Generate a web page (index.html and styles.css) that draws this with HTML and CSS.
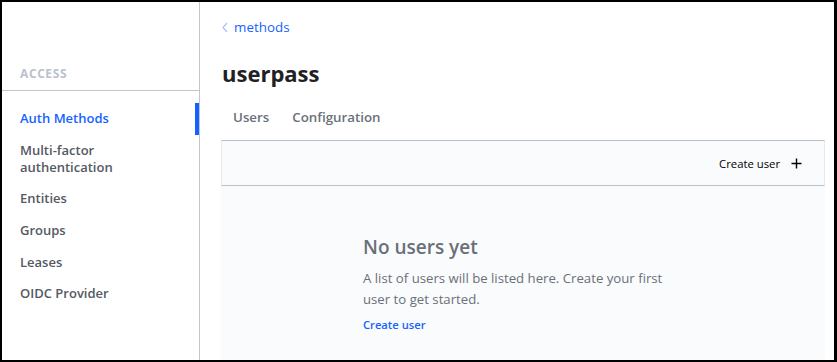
FILE: index.html
```html
<!DOCTYPE html>
<html lang="en">
<head>
  <meta charset="UTF-8">
  <title>userpass – Auth Methods</title>
  <link rel="stylesheet" href="styles.css">
</head>
<body>
  <div class="frame">
    <aside class="sidebar">
      <div class="sidebar-head">Access</div>
      <nav class="side-nav">
        <a class="side-link active">Auth Methods</a>
        <a class="side-link">Multi-factor<br>authentication</a>
        <a class="side-link">Entities</a>
        <a class="side-link">Groups</a>
        <a class="side-link">Leases</a>
        <a class="side-link">OIDC Provider</a>
      </nav>
    </aside>
    <main class="main">
      <a class="crumb">
        <svg width="6" height="11" viewBox="0 0 6 11"><path d="M5 1 L1 5.5 L5 10" fill="none" stroke="#a9c4ff" stroke-width="1.3"/></svg>
        <span>methods</span>
      </a>
      <h1 class="page-title">userpass</h1>
      <div class="tabs">
        <a class="tab">Users</a>
        <a class="tab">Configuration</a>
      </div>
      <div class="toolbar">
        <a class="toolbar-btn">
          Create user
          <svg width="11" height="11" viewBox="0 0 11 11"><path d="M5.5 0.5 V10.5 M0.5 5.5 H10.5" stroke="#000" stroke-width="1.4"/></svg>
        </a>
      </div>
      <div class="empty">
        <div class="empty-body">
          <h2 class="empty-title">No users yet</h2>
          <p class="empty-text">A list of users will be listed here. Create your first user to get started.</p>
          <a class="empty-link">Create user</a>
        </div>
      </div>
    </main>
  </div>
</body>
</html>
```

FILE: styles.css
```css
html, body {
  margin: 0;
  height: 100%;
  background: #000;
}
body {
  padding: 2px 3px 2px 2px;
  box-sizing: border-box;
  font-family: "Open Sans", "Noto Sans", sans-serif;
  color: #1f2124;
}
a { cursor: pointer; text-decoration: none; }
.frame {
  display: flex;
  height: 100%;
  background: #fff;
  overflow: hidden;
}
.sidebar {
  width: 197px;
  flex: 0 0 197px;
  border-right: 1px solid #c2c5cc;
}
.sidebar-head {
  height: 89px;
  box-sizing: border-box;
  display: flex;
  align-items: flex-end;
  padding: 0 18px 8px;
  border-bottom: 1px solid #c2c5cc;
  color: #bac1cc;
  font-size: 12px;
  font-weight: 700;
  letter-spacing: 0.6px;
  text-transform: uppercase;
}
.side-nav {
  display: flex;
  flex-direction: column;
  padding-top: 12px;
}
.side-link {
  padding: 7px 18px 7.7px;
  font-size: 13px;
  font-weight: 600;
  line-height: 17px;
  color: #545962;
}
.side-link.active {
  color: #1563ff;
  box-shadow: inset -4px 0 0 #1563ff;
}
.main {
  flex: 1;
  padding: 0 9px 0 21px;
  display: flex;
  flex-direction: column;
  background: #fff;
}
.crumb {
  display: flex;
  align-items: center;
  gap: 6px;
  margin: 15px 0 0 1px;
  color: #1563ff;
  font-size: 13.4px;
  line-height: 20px;
}
.page-title {
  margin: 22px 0 0 1px;
  font-size: 22px;
  font-weight: 700;
  line-height: 28px;
  color: #1f2124;
}
.tabs {
  display: flex;
  gap: 23px;
  padding: 20px 12px 0;
  height: 53px;
  box-sizing: border-box;
}
.tab {
  font-size: 13.3px;
  font-weight: 600;
  line-height: 20px;
  color: #6a7079;
}
.toolbar {
  display: flex;
  justify-content: flex-end;
  align-items: center;
  height: 46px;
  box-sizing: border-box;
  background: #fafbfc;
  border-top: 1px solid #bac1cc;
  border-bottom: 1px solid #bac1cc;
  border-left: 1px solid #e6e9ee;
  border-right: 1px solid #e6e9ee;
  padding: 0 22px;
}
.toolbar-btn {
  display: flex;
  align-items: center;
  gap: 11px;
  font-size: 11.3px;
  color: #000;
}
.empty {
  flex: 1;
  background: #fafbfc;
  display: flex;
  justify-content: center;
}
.empty-body {
  width: 320px;
  padding-top: 48px;
}
.empty-title {
  margin: 0;
  font-size: 19px;
  font-weight: 600;
  line-height: 26px;
  color: #6a7079;
}
.empty-text {
  margin: 8px 0 0;
  font-size: 13.2px;
  line-height: 21px;
  color: #6a7079;
}
.empty-link {
  display: block;
  margin-top: 7px;
  font-size: 11.2px;
  font-weight: 600;
  color: #1563ff;
}
```
